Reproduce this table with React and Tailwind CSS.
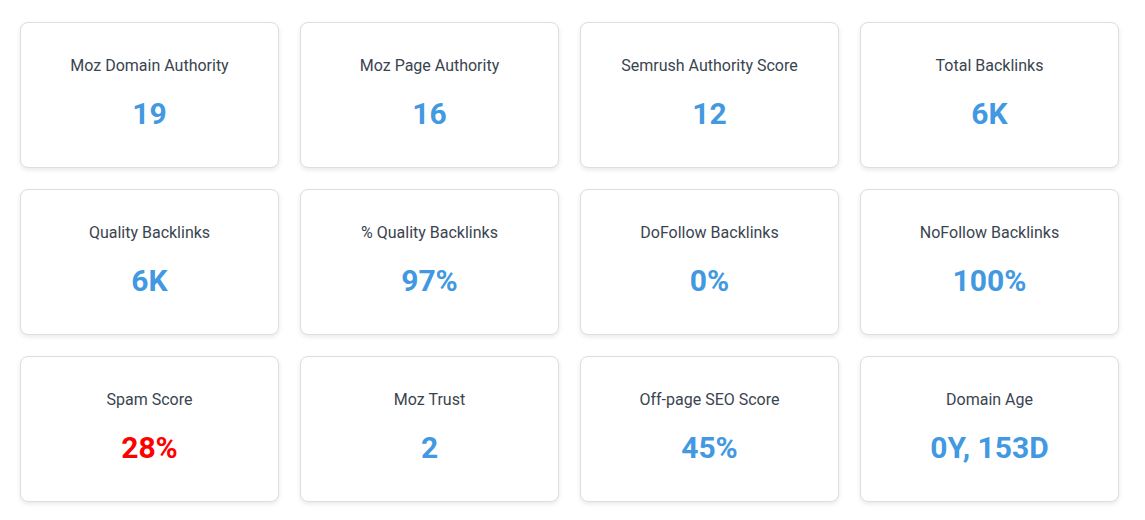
const stats = [
  { label: 'Moz Domain Authority', value: '19' },
  { label: 'Moz Page Authority', value: '16' },
  { label: 'Semrush Authority Score', value: '12' },
  { label: 'Total Backlinks', value: '6K' },
  { label: 'Quality Backlinks', value: '6K' },
  { label: '% Quality Backlinks', value: '97%' },
  { label: 'DoFollow Backlinks', value: '0%' },
  { label: 'NoFollow Backlinks', value: '100%' },
  { label: 'Spam Score', value: '28%', bad: true },
  { label: 'Moz Trust', value: '2' },
  { label: 'Off-page SEO Score', value: '45%' },
  { label: 'Domain Age', value: '0Y, 153D' },
];

function StatCard({ label, value, bad }) {
  return (
    <div className="h-[146px] flex flex-col items-center pt-[31px] bg-white border border-[#dedede] rounded-lg shadow-[0_2px_5px_rgba(0,0,0,0.09)]">
      <div className="text-base leading-6 text-[#3a4450]">{label}</div>
      <div
        className={
          bad
            ? 'mt-[18px] text-[30px] leading-9 font-bold text-[#ff0000]'
            : 'mt-[18px] text-[30px] leading-9 font-bold text-[#4299e1]'
        }
      >
        {value}
      </div>
    </div>
  );
}

export default function App() {
  return (
    <div className="min-h-[520px] bg-white pt-[22px] pl-5 font-['Roboto',sans-serif]">
      <div className="w-[1099px] grid grid-cols-4 gap-x-[21px] gap-y-[21px]">
        {stats.map((s) => (
          <StatCard key={s.label} {...s} />
        ))}
      </div>
    </div>
  );
}
